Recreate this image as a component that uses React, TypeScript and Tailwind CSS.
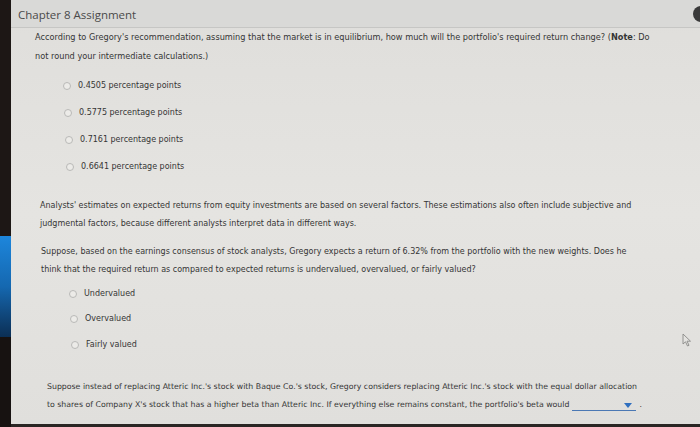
import React from "react";

const Radio: React.FC = () => (
  <span className="inline-block w-[8px] h-[8px] rounded-full border border-[#b9b9b7] bg-[#ecebe8] shrink-0" />
);

const Option: React.FC<{ label: string; left: string; h: string }> = ({ label, left, h }) => (
  <div className={`flex items-center gap-[7px] ${left} ${h}`}>
    <Radio />
    <span>{label}</span>
  </div>
);

export default function App() {
  const amounts = [
    { v: "0.4505", left: "pl-[52px]" },
    { v: "0.5775", left: "pl-[53px]" },
    { v: "0.7161", left: "pl-[54px]" },
    { v: "0.6641", left: "pl-[55px]" },
  ];

  return (
    <div className="w-[700px] h-[427px] flex overflow-hidden bg-[#1a1513]" style={{ fontFamily: "'DejaVu Sans', Verdana, sans-serif" }}>
      {/* dark edge of the monitor */}
      <div className="w-[11px] flex flex-col shrink-0">
        <div className="h-[236px] bg-[#1d1715]" />
        <div className="h-[101px] bg-gradient-to-b from-[#1d86dc] via-[#1568b0] to-[#0b2f55]" />
        <div className="flex-1 bg-[#171211]" />
      </div>

      <div className="flex-1 flex flex-col bg-gradient-to-b from-[#dfdedb] via-[#e5e4e1] to-[#e0dfdc] text-[#353535] text-[8px] relative">
        <div className="h-[28px] shrink-0 flex items-center justify-between bg-[#d9d9d7] border-b border-[#c6c6c4] pl-[7px]">
          <span className="text-[11.5px] text-[#4a4a4a] pt-[3px]" style={{ fontFamily: "'Open Sans', sans-serif" }}>
            Chapter 8 Assignment
          </span>
          <span className="w-[16px] h-[16px] rounded-full bg-[#3a3a3a] -mr-[9px]" />
        </div>

        <div className="pl-[24px] leading-[19px] text-[8.2px]">
          <p>
            According to Gregory's recommendation, assuming that the market is in equilibrium, how much will the portfolio's required return change? (<b>Note</b>: Do
          </p>
          <p>not round your intermediate calculations.)</p>
        </div>

        <div className="mt-[6px] flex flex-col">
          {amounts.map((a) => (
            <Option key={a.v} label={`${a.v} percentage points`} left={a.left} h="h-[27px]" />
          ))}
        </div>

        <div className="mt-[17px] pl-[29px] leading-[18px]">
          <p>
            Analysts' estimates on expected returns from equity investments are based on several factors. These estimations also often include subjective and
          </p>
          <p>judgmental factors, because different analysts interpret data in different ways.</p>
        </div>

        <div className="mt-[10px] pl-[30px] leading-[18px]">
          <p>
            Suppose, based on the earnings consensus of stock analysts, Gregory expects a return of 6.32% from the portfolio with the new weights. Does he
          </p>
          <p>think that the required return as compared to expected returns is undervalued, overvalued, or fairly valued?</p>
        </div>

        <div className="mt-[2px] flex flex-col">
          <Option label="Undervalued" left="pl-[58px]" h="h-[25.5px]" />
          <Option label="Overvalued" left="pl-[59px]" h="h-[25.5px]" />
          <Option label="Fairly valued" left="pl-[60px]" h="h-[25.5px]" />
        </div>

        <div className="mt-[20px] pl-[36px] leading-[18px] text-[7.8px]">
          <p>
            Suppose instead of replacing Atteric Inc.'s stock with Baque Co.'s stock, Gregory considers replacing Atteric Inc.'s stock with the equal dollar allocation
          </p>
          <p className="flex items-end">
            <span>
              to shares of Company X's stock that has a higher beta than Atteric Inc. If everything else remains constant, the portfolio's beta would
            </span>
            <span className="ml-[3px] mb-[3px] w-[64px] h-[10px] border-b border-[#4b78b4] flex items-center justify-end pr-[4px]">
              <svg width="8" height="5" viewBox="0 0 8 5">
                <path d="M0 0 H8 L4 5 Z" fill="#2f6fbf" />
              </svg>
            </span>
            <span className="ml-[3px]">.</span>
          </p>
        </div>

        <div className="flex-1" />
        <div className="h-[3px] bg-[#2a2624]" />

        <svg className="absolute left-[671px] top-[333px]" width="10" height="14" viewBox="0 0 10 14">
          <path d="M1 1 L1 11 L3.5 8.8 L5.5 13 L7 12.3 L5 8.2 L8.5 8.2 Z" fill="#e4e3e0" stroke="#8a8a88" strokeWidth="0.9" />
        </svg>
      </div>
    </div>
  );
}
